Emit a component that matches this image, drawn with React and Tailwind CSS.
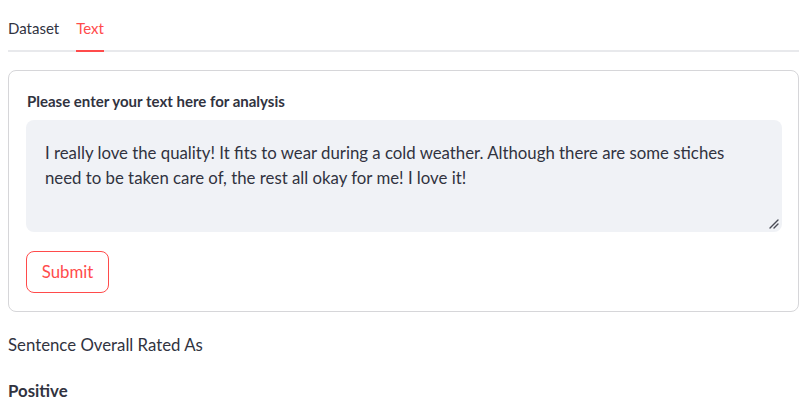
export default function App() {
  return (
    <div
      className="min-h-[417px] bg-white px-2 text-[#31333f]"
      style={{ fontFamily: "Lato, 'Liberation Sans', sans-serif" }}
    >
      <div className="flex h-[52px] gap-[17px] border-b-2 border-[#e8e9ec]">
        <div className="-mb-[2px] flex h-[52px] items-center pt-[4px] text-[15px]">Dataset</div>
        <div className="-mb-[2px] flex h-[52px] items-center border-b-2 border-[#ff4b4b] pt-[6px] text-[15px] text-[#ff4b4b]">
          Text
        </div>
      </div>

      <div className="mt-[18px] rounded-lg border border-[#d6d6d9] pb-[18px] pl-[17px] pr-[16px] pt-[20px]">
        <div className="pl-px text-[15px] font-bold leading-[20px]">Please enter your text here for analysis</div>
        <div className="relative mt-[9px]">
          <textarea
            className="block h-[112px] w-full resize-none rounded-lg bg-[#f0f2f6] pb-4 pl-[19px] pr-[19px] pt-[20px] text-[16.8px] leading-[25px] text-[#31333f] outline-none"
            defaultValue="I really love the quality! It fits to wear during a cold weather. Although there are some stiches need to be taken care of, the rest all okay for me! I love it!"
          />
          <svg
            className="pointer-events-none absolute bottom-[3px] right-[3px]"
            width="10"
            height="10"
            viewBox="0 0 10 10"
          >
            <path d="M1 9 L9 1 M5 9 L9 5" stroke="#4a4c56" strokeWidth="1.4" strokeLinecap="round" />
          </svg>
        </div>
        <button className="mt-[19px] flex h-[42px] w-[83px] items-center justify-center rounded-lg border border-[#ff4b4b] bg-white text-[16.8px] text-[#ff4b4b]">
          Submit
        </button>
      </div>

      <div className="mt-[20px] text-[16.8px] leading-[25px]">Sentence Overall Rated As</div>
      <div className="mt-[21px] text-[16.8px] font-bold leading-[25px]">Positive</div>
    </div>
  );
}
